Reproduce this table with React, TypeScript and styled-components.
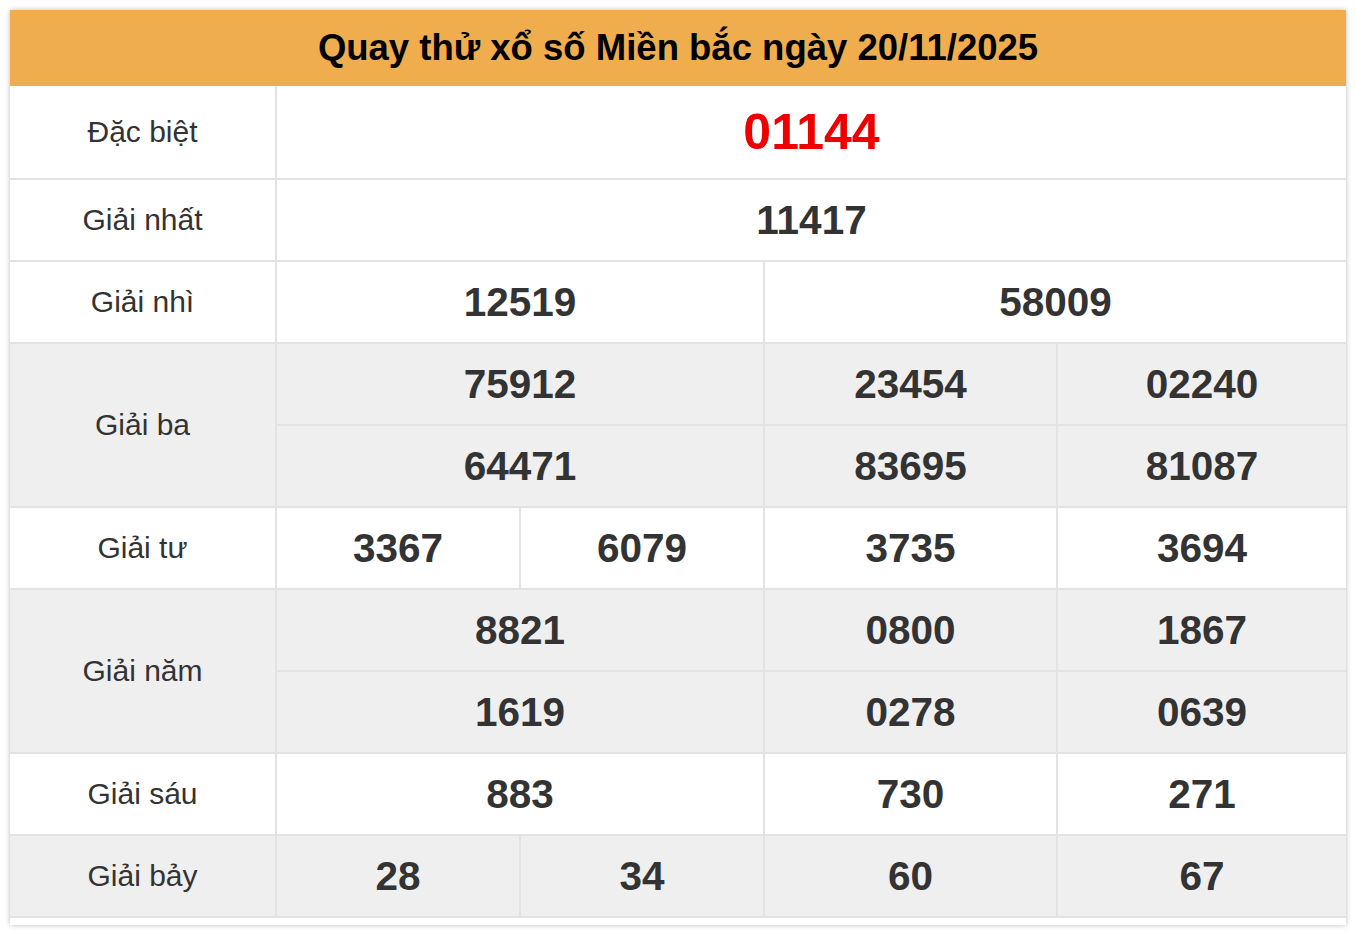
import React from 'react';
import styled, { createGlobalStyle } from 'styled-components';

const border = '#e3e3e3';
const shade = '#efefef';
const text = '#333333';

interface Cell {
  value: string;
  span?: number;
}

interface Prize {
  label: string;
  lines: Cell[][];
  shaded?: boolean;
  special?: boolean;
}

const prizes: Prize[] = [
  { label: 'Đặc biệt', lines: [[{ value: '01144', span: 4 }]], special: true },
  { label: 'Giải nhất', lines: [[{ value: '11417', span: 4 }]] },
  { label: 'Giải nhì', lines: [[{ value: '12519', span: 2 }, { value: '58009', span: 2 }]] },
  {
    label: 'Giải ba',
    shaded: true,
    lines: [
      [{ value: '75912', span: 2 }, { value: '23454' }, { value: '02240' }],
      [{ value: '64471', span: 2 }, { value: '83695' }, { value: '81087' }],
    ],
  },
  { label: 'Giải tư', lines: [[{ value: '3367' }, { value: '6079' }, { value: '3735' }, { value: '3694' }]] },
  {
    label: 'Giải năm',
    shaded: true,
    lines: [
      [{ value: '8821', span: 2 }, { value: '0800' }, { value: '1867' }],
      [{ value: '1619', span: 2 }, { value: '0278' }, { value: '0639' }],
    ],
  },
  { label: 'Giải sáu', lines: [[{ value: '883', span: 2 }, { value: '730' }, { value: '271' }]] },
  { label: 'Giải bảy', shaded: true, lines: [[{ value: '28' }, { value: '34' }, { value: '60' }, { value: '67' }]] },
];

const App: React.FC = () => {
  return (
    <>
      <GlobalStyle />
      <Page>
        <Card>
          <Title>Quay thử xổ số Miền bắc ngày 20/11/2025</Title>
          <Table>
            {prizes.map(prize => (
              <React.Fragment key={prize.label}>
                <Label $rows={prize.lines.length} $shaded={prize.shaded}>
                  {prize.label}
                </Label>
                {prize.lines.map((line, i) =>
                  line.map((cell, j) => (
                    <Number
                      key={`${prize.label}-${i}-${j}`}
                      $span={cell.span || 1}
                      $shaded={prize.shaded}
                      $special={prize.special}
                    >
                      {cell.value}
                    </Number>
                  )),
                )}
              </React.Fragment>
            ))}
          </Table>
        </Card>
      </Page>
    </>
  );
};

const GlobalStyle = createGlobalStyle`
  body {
    margin: 0;
    background: #ffffff;
    font-family: "Liberation Sans", Arial, Helvetica, sans-serif;
  }
`;

const Page = styled.div`
  padding: 10px;
`;

const Card = styled.div`
  width: 1336px;
  background: #ffffff;
  box-shadow: 0 0 5px rgba(0, 0, 0, 0.28);
  padding-bottom: 7px;
`;

const Title = styled.div`
  height: 76px;
  display: flex;
  align-items: center;
  justify-content: center;
  background: #efad4e;
  color: #000000;
  font-size: 36.5px;
  font-weight: bold;
`;

const Table = styled.div`
  display: grid;
  grid-template-columns: 265px 242px 242px 291px 288px;
  grid-template-rows: 92px repeat(9, 80px);
  gap: 2px;
  padding-bottom: 2px;
  background: ${border};
`;

const Label = styled.div<{ $rows: number; $shaded?: boolean }>`
  grid-row: span ${p => p.$rows};
  display: flex;
  align-items: center;
  justify-content: center;
  background: ${p => (p.$shaded ? shade : '#ffffff')};
  color: ${text};
  font-size: 30px;
`;

const Number = styled.div<{ $span: number; $shaded?: boolean; $special?: boolean }>`
  grid-column: span ${p => p.$span};
  display: flex;
  align-items: center;
  justify-content: center;
  background: ${p => (p.$shaded ? shade : '#ffffff')};
  color: ${p => (p.$special ? '#ee0000' : text)};
  font-size: ${p => (p.$special ? '50px' : '40.5px')};
  font-weight: bold;
`;

export default App;
